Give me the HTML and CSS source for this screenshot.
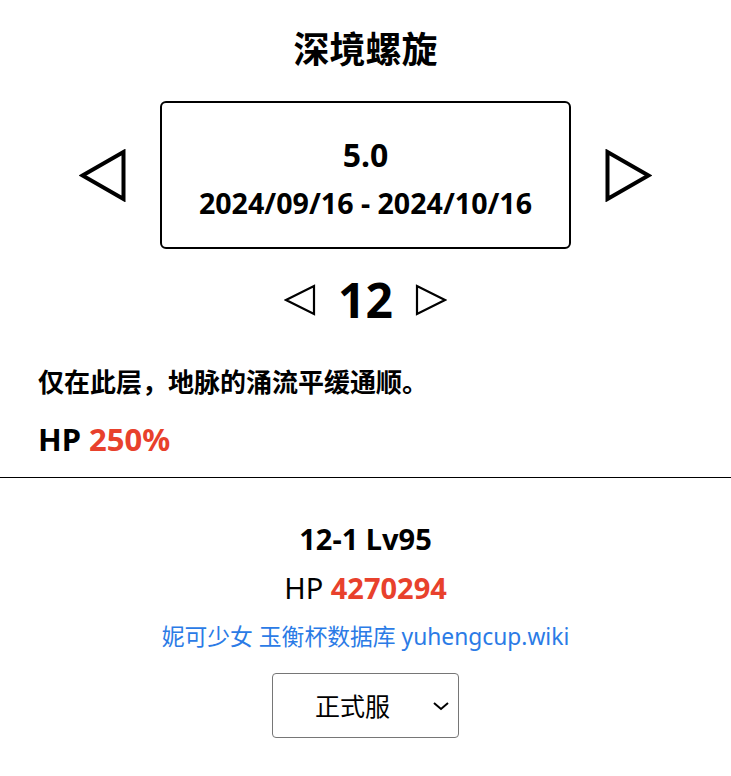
FILE: index.html
```html
<!DOCTYPE html>
<html lang="zh-CN">
<head>
<meta charset="utf-8">
<title>深境螺旋</title>
<link rel="stylesheet" href="styles.css">
</head>
<body>
<main class="page">
  <h1 class="title">深境螺旋</h1>

  <div class="period-row">
    <button class="arrow big" aria-label="上一期">
      <svg width="47" height="53" viewBox="0 0 47 53"><polygon points="3.5,26.5 44.5,3 44.5,50" fill="none" stroke="#000" stroke-width="4" stroke-linejoin="miter"/></svg>
    </button>
    <div class="period-box">
      <div class="version">5.0</div>
      <div class="dates">2024/09/16 - 2024/10/16</div>
    </div>
    <button class="arrow big" aria-label="下一期">
      <svg width="47" height="53" viewBox="0 0 47 53"><polygon points="43.5,26.5 2.5,3 2.5,50" fill="none" stroke="#000" stroke-width="4" stroke-linejoin="miter"/></svg>
    </button>
  </div>

  <div class="floor-row">
    <button class="arrow small" aria-label="上一层">
      <svg width="32" height="32" viewBox="0 0 32 32"><polygon points="2,16 30,2 30,30" fill="none" stroke="#000" stroke-width="2.2"/></svg>
    </button>
    <span class="floor">12</span>
    <button class="arrow small" aria-label="下一层">
      <svg width="32" height="32" viewBox="0 0 32 32"><polygon points="30,16 2,2 2,30" fill="none" stroke="#000" stroke-width="2.2"/></svg>
    </button>
  </div>

  <section class="floor-info">
    <p class="desc">仅在此层，地脉的涌流平缓通顺。</p>
    <p class="hp-mult">HP <span class="red">250%</span></p>
  </section>

  <hr class="divider">

  <section class="chamber">
    <div class="chamber-title">12-1 Lv95</div>
    <div class="chamber-hp">HP <span class="red bold">4270294</span></div>
    <a class="link" href="#">妮可少女 玉衡杯数据库 yuhengcup.wiki</a>
    <div class="select">
      <span class="select-text">正式服</span>
      <svg class="chev" width="18" height="10" viewBox="0 0 18 10"><polyline points="2,2 9,8 16,2" fill="none" stroke="#000" stroke-width="2"/></svg>
    </div>
  </section>
</main>
</body>
</html>
```

FILE: styles.css
```css
html, body {
  margin: 0;
  padding: 0;
  background: #fff;
}
body {
  font-family: "Noto Sans", "Noto Sans CJK SC", sans-serif;
  color: #000;
}
.page {
  display: flex;
  flex-direction: column;
}
.title {
  margin: 0;
  padding-top: 28px;
  font-size: 36px;
  line-height: 44px;
  font-weight: 700;
  text-align: center;
}
.period-row {
  margin-top: 29px;
  display: flex;
  justify-content: center;
  align-items: center;
  gap: 34px;
}
.arrow {
  border: 0;
  background: none;
  padding: 0;
  display: flex;
  cursor: pointer;
}
.period-box {
  box-sizing: border-box;
  width: 411px;
  height: 148px;
  border: 2px solid #000;
  border-radius: 6px;
  padding-top: 32px;
  display: flex;
  flex-direction: column;
  align-items: center;
  gap: 10px;
  font-weight: 700;
}
.version {
  font-size: 32px;
  line-height: 40px;
}
.dates {
  font-size: 28.6px;
  line-height: 36px;
}
.floor-row {
  margin-top: 23px;
  display: flex;
  justify-content: center;
  align-items: center;
  gap: 22px;
  height: 56px;
}
.floor {
  font-size: 48px;
  line-height: 56px;
  font-weight: 700;
}
.floor-info {
  padding: 0 38px;
  margin-top: 36px;
}
.desc {
  margin: 0;
  font-size: 26px;
  line-height: 36px;
  font-weight: 700;
}
.hp-mult {
  margin: 19px 0 0;
  font-size: 31px;
  line-height: 40px;
  font-weight: 700;
}
.red {
  color: #e8412c;
}
.bold {
  font-weight: 700;
}
.divider {
  margin: 18px 0 0;
  border: 0;
  border-top: 1px solid #000;
  height: 0;
}
.chamber {
  display: flex;
  flex-direction: column;
  align-items: center;
  padding-top: 41px;
}
.chamber-title {
  font-size: 29px;
  line-height: 40px;
  font-weight: 700;
}
.chamber-hp {
  margin-top: 9px;
  font-size: 29px;
  line-height: 40px;
}
.link {
  margin-top: 13px;
  font-size: 22.8px;
  line-height: 32px;
  color: #2b7be6;
  text-decoration: none;
}
.select {
  margin-top: 20px;
  box-sizing: border-box;
  width: 187px;
  height: 65px;
  border: 1px solid #767676;
  border-radius: 4px;
  display: flex;
  align-items: center;
  padding: 0 8px 0 42px;
}
.select-text {
  font-size: 25px;
  line-height: 32px;
}
.chev {
  margin-left: auto;
}
```
